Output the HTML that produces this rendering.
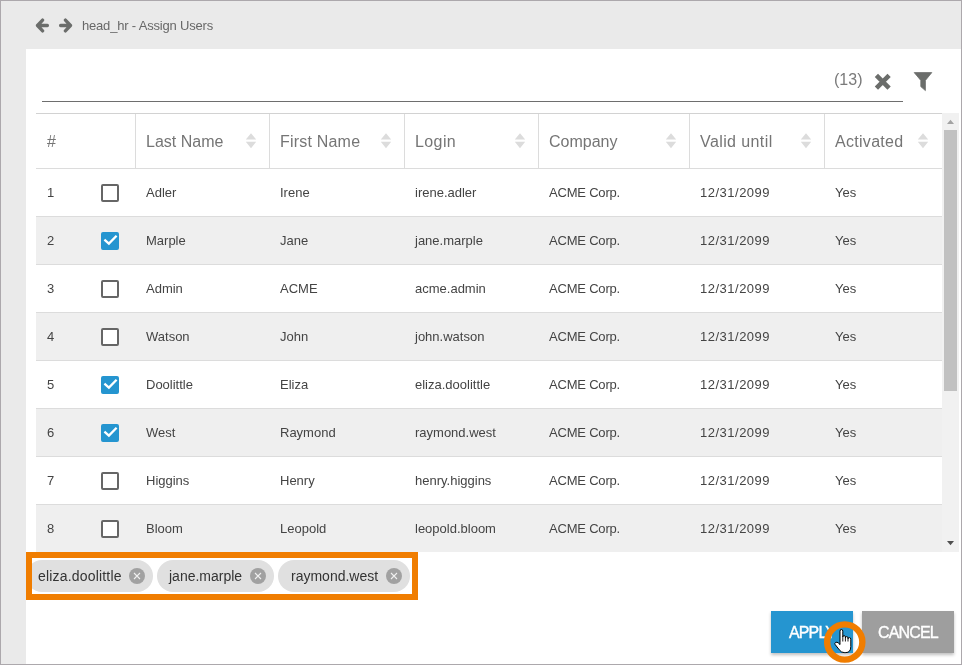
<!DOCTYPE html>
<html><head><meta charset="utf-8">
<style>
*{box-sizing:border-box;margin:0;padding:0}
html,body{width:962px;height:665px;overflow:hidden;background:#eaeaea;font-family:"Liberation Sans",sans-serif}
#frame{position:absolute;left:0;top:0;width:962px;height:665px;border:1px solid #aca8ac;background:#eaeaea}
.abs{position:absolute}
#title{left:82px;top:18px;font-size:13px;letter-spacing:-0.19px;color:#686868;white-space:nowrap}
#panel{left:26px;top:49px;width:935px;height:615px;background:#fff}
#uline{left:42px;top:101px;width:861px;height:1px;background:#6e6e6e}
#count{left:834px;top:71px;font-size:16px;color:#7a7a7a}
#tbl{left:36px;top:113px;width:906px;height:439px;overflow:hidden;border-top:1px solid #d2d2d2}
.hdr{position:absolute;left:0;top:0;height:55px;width:906px;border-bottom:1px solid #dcdcdc}
.hc{position:absolute;top:1px;height:54px;font-size:16px;color:#757575;line-height:54px;padding-left:11px;white-space:nowrap}
.vl{position:absolute;top:0;width:1px;height:54px;background:#dcdcdc}
.row{position:absolute;left:0;width:906px;height:48px;border-bottom:1px solid #dcdcdc}
.row.g{background:#efefef}
.c{position:absolute;top:0;height:47px;line-height:47px;font-size:13px;color:#444;white-space:nowrap}
.cb{position:absolute;left:65px;top:15px;width:18px;height:18px;border:2px solid #666;border-radius:2px;background:#fff}
.cb.on{background:#2595d0;border-color:#2595d0}
.sort{position:absolute;top:19px;width:10px;height:16px}
#sb{left:942px;top:113px;width:17px;height:439px;background:#f1f1f1}
#thumb{left:944px;top:130px;width:13px;height:261px;background:#c1c1c1}
.chip{position:absolute;top:560px;height:32px;border-radius:16px;background:#e0e0e0;font-size:14px;color:#333;line-height:32px;white-space:nowrap}
.x{position:absolute;top:8px;width:16px;height:16px}
#orange{left:26px;top:552px;width:392px;height:48px;border:6px solid #f07d00}
.btn{position:absolute;top:611px;height:42px;font-size:16px;color:#fff;line-height:44px;letter-spacing:-0.85px;-webkit-text-stroke:0.35px #fff;text-align:center;box-shadow:0 2px 3px rgba(0,0,0,.25)}
#root{position:absolute;left:0;top:0;width:962px;height:665px;will-change:transform}

</style></head><body>
<div id="root">
<div id="frame"></div>
<svg class="abs" style="left:35px;top:18px" width="38" height="15" viewBox="0 0 38 15">
<path d="M7.6 2.1 L2.5 7.5 L7.6 12.9 M2.8 7.5 H12.4" stroke="#6b6d6b" stroke-width="3.3" fill="none" stroke-linecap="round" stroke-linejoin="round"/>
<path d="M30.4 2.1 L35.5 7.5 L30.4 12.9 M35.2 7.5 H25.6" stroke="#6b6d6b" stroke-width="3.3" fill="none" stroke-linecap="round" stroke-linejoin="round"/>
</svg>
<div id="title" class="abs">head_hr - Assign Users</div>
<div id="panel" class="abs"></div>
<div id="uline" class="abs"></div>
<div id="count" class="abs">(13)</div>
<svg class="abs" style="left:874px;top:74px;overflow:visible" width="17" height="16" viewBox="0 0 17 16">
<path d="M2.4 1.4 L15.1 14.2 M15.1 1.4 L2.4 14.2" stroke="#6b6d6b" stroke-width="4.6" stroke-linecap="butt"/>
</svg>
<svg class="abs" style="left:913px;top:72px" width="20" height="20" viewBox="0 0 20 20">
<path d="M1.2 0.6 H18.8 L12.4 8.4 V18.6 L7.8 14.6 V8.4 Z" fill="#6b6d6b" stroke="#6b6d6b" stroke-width="0.8" stroke-linejoin="round"/>
</svg>
<div id="tbl" class="abs">
<div class="hdr"><div class="hc" style="left:0px;letter-spacing:0px">#</div><div class="vl" style="left:99px"></div><div class="hc" style="left:99px;letter-spacing:0px">Last Name</div><svg class="sort" style="left:210px;overflow:visible" width="10" height="16" viewBox="0 0 10 16"><path d="M5 0.2 L10.2 6.5 H-0.2 Z M-0.2 8.8 H10.2 L5 15.2 Z" fill="#dcdcdc"/></svg><div class="vl" style="left:233px"></div><div class="hc" style="left:233px;letter-spacing:0.2px">First Name</div><svg class="sort" style="left:345px;overflow:visible" width="10" height="16" viewBox="0 0 10 16"><path d="M5 0.2 L10.2 6.5 H-0.2 Z M-0.2 8.8 H10.2 L5 15.2 Z" fill="#dcdcdc"/></svg><div class="vl" style="left:368px"></div><div class="hc" style="left:368px;letter-spacing:0.4px">Login</div><svg class="sort" style="left:479px;overflow:visible" width="10" height="16" viewBox="0 0 10 16"><path d="M5 0.2 L10.2 6.5 H-0.2 Z M-0.2 8.8 H10.2 L5 15.2 Z" fill="#dcdcdc"/></svg><div class="vl" style="left:502px"></div><div class="hc" style="left:502px;letter-spacing:0px">Company</div><svg class="sort" style="left:630px;overflow:visible" width="10" height="16" viewBox="0 0 10 16"><path d="M5 0.2 L10.2 6.5 H-0.2 Z M-0.2 8.8 H10.2 L5 15.2 Z" fill="#dcdcdc"/></svg><div class="vl" style="left:653px"></div><div class="hc" style="left:653px;letter-spacing:0.4px">Valid until</div><svg class="sort" style="left:765px;overflow:visible" width="10" height="16" viewBox="0 0 10 16"><path d="M5 0.2 L10.2 6.5 H-0.2 Z M-0.2 8.8 H10.2 L5 15.2 Z" fill="#dcdcdc"/></svg><div class="vl" style="left:788px"></div><div class="hc" style="left:788px;letter-spacing:0.3px">Activated</div><svg class="sort" style="left:882px;overflow:visible" width="10" height="16" viewBox="0 0 10 16"><path d="M5 0.2 L10.2 6.5 H-0.2 Z M-0.2 8.8 H10.2 L5 15.2 Z" fill="#dcdcdc"/></svg></div>
<div class="row" style="top:55px"><div class="c" style="left:11px">1</div><div class="c" style="left:110px">Adler</div><div class="c" style="left:244px">Irene</div><div class="c" style="left:379px">irene.adler</div><div class="c" style="left:513px;letter-spacing:-0.2px">ACME Corp.</div><div class="c" style="left:664px;letter-spacing:0.5px">12/31/2099</div><div class="c" style="left:799px">Yes</div><div class="cb"></div></div><div class="row g" style="top:103px"><div class="c" style="left:11px">2</div><div class="c" style="left:110px">Marple</div><div class="c" style="left:244px">Jane</div><div class="c" style="left:379px">jane.marple</div><div class="c" style="left:513px;letter-spacing:-0.2px">ACME Corp.</div><div class="c" style="left:664px;letter-spacing:0.5px">12/31/2099</div><div class="c" style="left:799px">Yes</div><div class="cb on"><svg width="14" height="14" viewBox="0 0 14 14" style="position:absolute;left:0;top:0;overflow:visible"><path d="M1.4 5.6 L5.9 9.6 L13.6 1.7" stroke="#fff" stroke-width="2.3" fill="none"/></svg></div></div><div class="row" style="top:151px"><div class="c" style="left:11px">3</div><div class="c" style="left:110px">Admin</div><div class="c" style="left:244px">ACME</div><div class="c" style="left:379px">acme.admin</div><div class="c" style="left:513px;letter-spacing:-0.2px">ACME Corp.</div><div class="c" style="left:664px;letter-spacing:0.5px">12/31/2099</div><div class="c" style="left:799px">Yes</div><div class="cb"></div></div><div class="row g" style="top:199px"><div class="c" style="left:11px">4</div><div class="c" style="left:110px">Watson</div><div class="c" style="left:244px">John</div><div class="c" style="left:379px">john.watson</div><div class="c" style="left:513px;letter-spacing:-0.2px">ACME Corp.</div><div class="c" style="left:664px;letter-spacing:0.5px">12/31/2099</div><div class="c" style="left:799px">Yes</div><div class="cb"></div></div><div class="row" style="top:247px"><div class="c" style="left:11px">5</div><div class="c" style="left:110px">Doolittle</div><div class="c" style="left:244px">Eliza</div><div class="c" style="left:379px">eliza.doolittle</div><div class="c" style="left:513px;letter-spacing:-0.2px">ACME Corp.</div><div class="c" style="left:664px;letter-spacing:0.5px">12/31/2099</div><div class="c" style="left:799px">Yes</div><div class="cb on"><svg width="14" height="14" viewBox="0 0 14 14" style="position:absolute;left:0;top:0;overflow:visible"><path d="M1.4 5.6 L5.9 9.6 L13.6 1.7" stroke="#fff" stroke-width="2.3" fill="none"/></svg></div></div><div class="row g" style="top:295px"><div class="c" style="left:11px">6</div><div class="c" style="left:110px">West</div><div class="c" style="left:244px">Raymond</div><div class="c" style="left:379px">raymond.west</div><div class="c" style="left:513px;letter-spacing:-0.2px">ACME Corp.</div><div class="c" style="left:664px;letter-spacing:0.5px">12/31/2099</div><div class="c" style="left:799px">Yes</div><div class="cb on"><svg width="14" height="14" viewBox="0 0 14 14" style="position:absolute;left:0;top:0;overflow:visible"><path d="M1.4 5.6 L5.9 9.6 L13.6 1.7" stroke="#fff" stroke-width="2.3" fill="none"/></svg></div></div><div class="row" style="top:343px"><div class="c" style="left:11px">7</div><div class="c" style="left:110px">Higgins</div><div class="c" style="left:244px">Henry</div><div class="c" style="left:379px">henry.higgins</div><div class="c" style="left:513px;letter-spacing:-0.2px">ACME Corp.</div><div class="c" style="left:664px;letter-spacing:0.5px">12/31/2099</div><div class="c" style="left:799px">Yes</div><div class="cb"></div></div><div class="row g" style="top:391px"><div class="c" style="left:11px">8</div><div class="c" style="left:110px">Bloom</div><div class="c" style="left:244px">Leopold</div><div class="c" style="left:379px">leopold.bloom</div><div class="c" style="left:513px;letter-spacing:-0.2px">ACME Corp.</div><div class="c" style="left:664px;letter-spacing:0.5px">12/31/2099</div><div class="c" style="left:799px">Yes</div><div class="cb"></div></div>
</div>
<div id="sb" class="abs">
<svg style="position:absolute;left:4px;top:6px;overflow:visible" width="9" height="6" viewBox="0 0 9 6"><path d="M1 5 L4.5 0.8 L8 5 Z" fill="#a3a3a3"/></svg>
<svg style="position:absolute;left:4px;top:427px;overflow:visible" width="9" height="6" viewBox="0 0 9 6"><path d="M1 1 L8 1 L4.5 5.2 Z" fill="#505050"/></svg>
</div>
<div id="thumb" class="abs"></div>
<div class="chip" style="left:26px;width:127px"><span style="position:absolute;left:12px;top:0;letter-spacing:0.18px">eliza.doolittle</span><svg class="x" style="left:103px" width="16" height="16" viewBox="0 0 16 16"><circle cx="8" cy="8" r="8" fill="#a1a1a1"/><path d="M5 5 L11 11 M11 5 L5 11" stroke="#f0f0f0" stroke-width="1.1"/></svg></div><div class="chip" style="left:157px;width:117px"><span style="position:absolute;left:12px;top:0;letter-spacing:0px">jane.marple</span><svg class="x" style="left:93px" width="16" height="16" viewBox="0 0 16 16"><circle cx="8" cy="8" r="8" fill="#a1a1a1"/><path d="M5 5 L11 11 M11 5 L5 11" stroke="#f0f0f0" stroke-width="1.1"/></svg></div><div class="chip" style="left:278px;width:132px"><span style="position:absolute;left:13px;top:0;letter-spacing:0px">raymond.west</span><svg class="x" style="left:108px" width="16" height="16" viewBox="0 0 16 16"><circle cx="8" cy="8" r="8" fill="#a1a1a1"/><path d="M5 5 L11 11 M11 5 L5 11" stroke="#f0f0f0" stroke-width="1.1"/></svg></div>
<div id="orange" class="abs"></div>
<div class="btn" style="left:771px;width:82px;background:#2595d0">APPLY</div>
<div class="btn" style="left:862px;width:92px;background:#9e9e9e">CANCEL</div>
<svg class="abs" style="left:822px;top:620px;overflow:visible" width="46" height="46" viewBox="0 0 46 46">
<circle cx="22.75" cy="22" r="17.6" stroke="#f07d00" stroke-width="6.4" fill="none"/>
<g transform="translate(11,8)">
<path d="M7 14.5 V3.2 Q7 1.5 8.4 1.5 Q9.8 1.5 9.8 3.2 V9 Q9.8 7.6 11.1 7.6 Q12.4 7.6 12.4 9 V10 Q12.4 8.6 13.7 8.6 Q15 8.6 15 10 V10.9 Q15 9.6 16.4 9.6 Q17.8 9.6 17.8 11.2 V18.5 Q17.8 24.6 12.8 24.6 H11.2 Q8.2 24.6 6.3 21.8 L2.2 16.6 Q1.3 15.2 2.6 14.4 Q4 13.7 5.4 15 L7 16.6 Z" fill="#fff" stroke="#000" stroke-width="1" stroke-linejoin="round"/>
<path d="M9.8 9 V13.5 M12.4 10 V13.5 M15 10.9 V13.5" stroke="#000" stroke-width="0.9" fill="none"/>
</g>
</svg>
</div>
</body></html>
